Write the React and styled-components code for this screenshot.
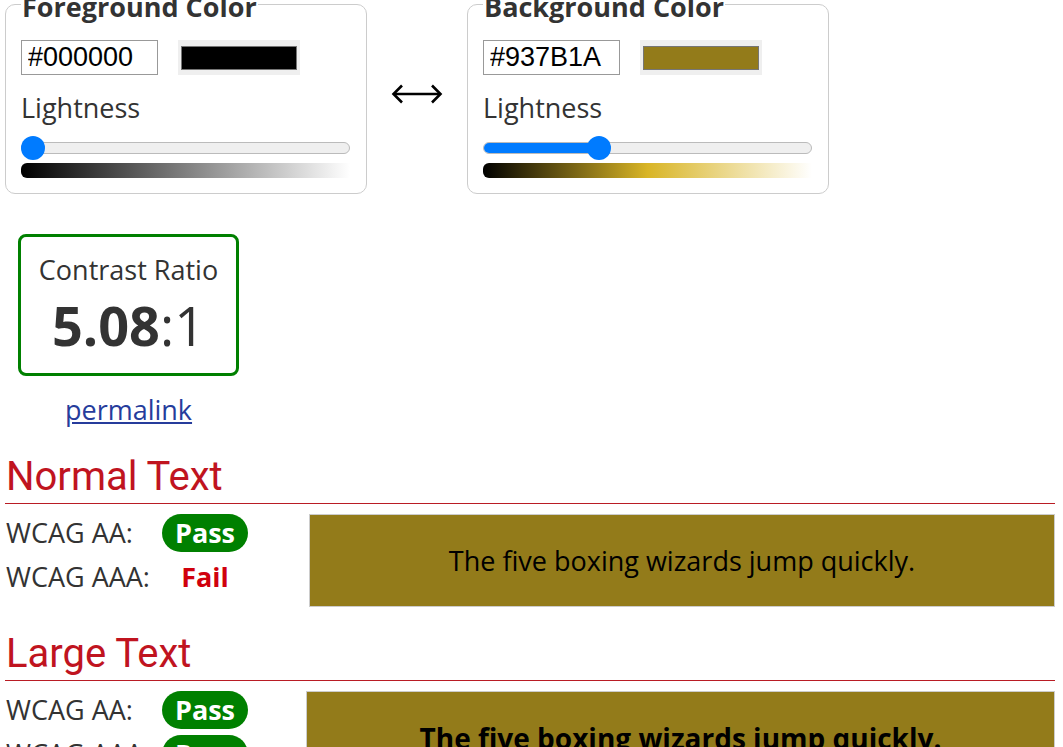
import React from 'react'
import styled, { createGlobalStyle } from 'styled-components'

const GlobalStyle = createGlobalStyle`
  body {
    margin: 0;
    background: #fff;
    font-family: 'Open Sans', 'DejaVu Sans', sans-serif;
    font-size: 27px;
    color: #333;
  }
`

const Page = styled.div`
  margin-top: -17px;
  padding: 0 8px 40px 5px;
`

const ColorRow = styled.div`
  display: flex;
  align-items: stretch;
`

const Fieldset = styled.fieldset`
  width: 362px;
  box-sizing: border-box;
  margin: 0;
  padding: 15px 16px 15px 15px;
  border: 1px solid #ccc;
  border-radius: 10px;
`

const Legend = styled.legend`
  padding: 6px 1px 0;
  font-weight: 700;
  font-size: 27px;
  line-height: 36px;
  color: #333;
`

const InputRow = styled.div`
  display: flex;
  align-items: center;
  gap: 20px;
`

const HexInput = styled.input`
  width: 137px;
  height: 35px;
  box-sizing: border-box;
  padding: 0 6px;
  border: 1px solid #999;
  font-family: 'Liberation Sans', Arial, sans-serif;
  font-size: 27px;
  color: #000;
`

const Swatch = styled.div`
  width: 122px;
  height: 35px;
  box-sizing: border-box;
  padding: 6px 3px 5px;
  background: #efefef;
`

const SwatchFill = styled.div`
  height: 100%;
  box-sizing: border-box;
  border: 1px solid #767676;
  background: ${p => p.color};
`

const Label = styled.div`
  margin-top: 15px;
  line-height: 36px;
`

const Slider = styled.div`
  position: relative;
  margin-top: 10px;
  height: 24px;
  display: flex;
  align-items: center;
`

const Track = styled.div`
  width: 100%;
  height: 12px;
  box-sizing: border-box;
  border: 1px solid #bbb;
  border-radius: 6px;
  background: #efefef;
  overflow: hidden;
`

const TrackFill = styled.div`
  height: 100%;
  background: #007bff;
`

const Thumb = styled.div`
  position: absolute;
  top: 0;
  width: 24px;
  height: 24px;
  border-radius: 50%;
  background: #007bff;
`

const Gradient = styled.div`
  margin-top: 3px;
  height: 15px;
  border-radius: 6px 0 0 6px;
  background: linear-gradient(to right, ${p => p.stops});
`

const Swap = styled.div`
  width: 100px;
  display: flex;
  align-items: center;
  justify-content: center;
  padding-top: 10px;
`

const RatioWrap = styled.div`
  margin: 40px 0 0 13px;
  width: 221px;
  display: flex;
  flex-direction: column;
  align-items: center;
`

const RatioBox = styled.div`
  width: 221px;
  box-sizing: border-box;
  border: 3px solid #008000;
  border-radius: 8px;
  padding: 15px 0 14px;
  text-align: center;
`

const RatioTitle = styled.div`
  line-height: 36px;
`

const RatioValue = styled.div`
  margin-top: 4px;
  font-size: 54px;
  line-height: 67px;
  b {
    font-weight: 700;
  }
  span {
    font-weight: 400;
  }
`

const Permalink = styled.a`
  margin-top: 16px;
  line-height: 36px;
  color: #263c9c;
  text-decoration: underline;
`

const Section = styled.section`
  margin-top: ${p => p.$top}px;
`

const Heading = styled.h2`
  margin: 0;
  padding: 0 0 2px 1px;
  border-bottom: 1px solid #b91c24;
  font-family: Roboto, 'Liberation Sans', sans-serif;
  font-weight: 400;
  font-size: 40px;
  line-height: 48px;
  color: #c0141f;
`

const Result = styled.div`
  display: flex;
  align-items: flex-start;
  padding-top: 10px;
`

const Checks = styled.div`
  width: ${p => p.$width}px;
  flex: none;
  display: flex;
  flex-direction: column;
  gap: 6px;
`

const CheckRow = styled.div`
  display: flex;
  align-items: center;
  height: 38px;
  padding-left: 1px;
`

const CheckLabel = styled.span`
  width: 156px;
  line-height: 36px;
  white-space: nowrap;
`

const Verdict = styled.span`
  width: 86px;
  height: 38px;
  border-radius: 19px;
  display: flex;
  align-items: center;
  justify-content: center;
  font-weight: 700;
  line-height: 36px;
  color: ${p => (p.$pass ? '#fff' : '#d0000d')};
  background: ${p => (p.$pass ? '#008000' : 'transparent')};
`

const Preview = styled.div`
  flex: 1;
  height: 93px;
  box-sizing: border-box;
  border: 1px solid #ccc;
  background: ${p => p.$bg};
  color: ${p => p.$fg};
  display: flex;
  align-items: center;
  justify-content: center;
  font-size: ${p => (p.$large ? 28 : 27)}px;
  font-weight: ${p => (p.$large ? 700 : 400)};
  line-height: 36px;
`

function ArrowIcon() {
  return (
    <svg width="52" height="22" viewBox="0 0 52 22" fill="none" stroke="#000" strokeWidth="2.6">
      <path d="M3 11H49" />
      <path d="M11 2.5L2.5 11L11 19.5" strokeLinejoin="miter" />
      <path d="M41 2.5L49.5 11L41 19.5" strokeLinejoin="miter" />
    </svg>
  )
}

function ColorPicker({ title, hex, hue, sat, lightness }) {
  const pos = (lightness / 100) * (329 - 24)
  return (
    <Fieldset>
      <Legend>{title}</Legend>
      <InputRow>
        <HexInput defaultValue={hex} />
        <Swatch>
          <SwatchFill color={hex} />
        </Swatch>
      </InputRow>
      <Label>Lightness</Label>
      <Slider>
        <Track>
          <TrackFill style={{ width: pos + 12 }} />
        </Track>
        <Thumb style={{ left: pos }} />
      </Slider>
      <Gradient
        stops={`hsl(${hue}, ${sat}%, 0%), hsl(${hue}, ${sat}%, 50%), hsl(${hue}, ${sat}%, 100%)`}
      />
    </Fieldset>
  )
}

function TextResult({ title, top, checksWidth, large }) {
  return (
    <Section $top={top}>
      <Heading>{title}</Heading>
      <Result>
        <Checks $width={checksWidth}>
          <CheckRow>
            <CheckLabel>WCAG AA:</CheckLabel>
            <Verdict $pass>Pass</Verdict>
          </CheckRow>
          <CheckRow>
            <CheckLabel>WCAG AAA:</CheckLabel>
            <Verdict $pass={large}>{large ? 'Pass' : 'Fail'}</Verdict>
          </CheckRow>
        </Checks>
        <Preview $bg="#937B1A" $fg="#000000" $large={large}>
          The five boxing wizards jump quickly.
        </Preview>
      </Result>
    </Section>
  )
}

export default function App() {
  return (
    <>
      <GlobalStyle />
      <Page>
        <ColorRow>
          <ColorPicker title="Foreground Color" hex="#000000" hue={0} sat={0} lightness={0} />
          <Swap>
            <ArrowIcon />
          </Swap>
          <ColorPicker title="Background Color" hex="#937B1A" hue={48} sat={70} lightness={34} />
        </ColorRow>

        <RatioWrap>
          <RatioBox>
            <RatioTitle>Contrast Ratio</RatioTitle>
            <RatioValue>
              <b>5.08</b>
              <span>:1</span>
            </RatioValue>
          </RatioBox>
          <Permalink href="#">permalink</Permalink>
        </RatioWrap>

        <TextResult title="Normal Text" top={25} checksWidth={304} />
        <TextResult title="Large Text" top={23} checksWidth={301} large />
      </Page>
    </>
  )
}
